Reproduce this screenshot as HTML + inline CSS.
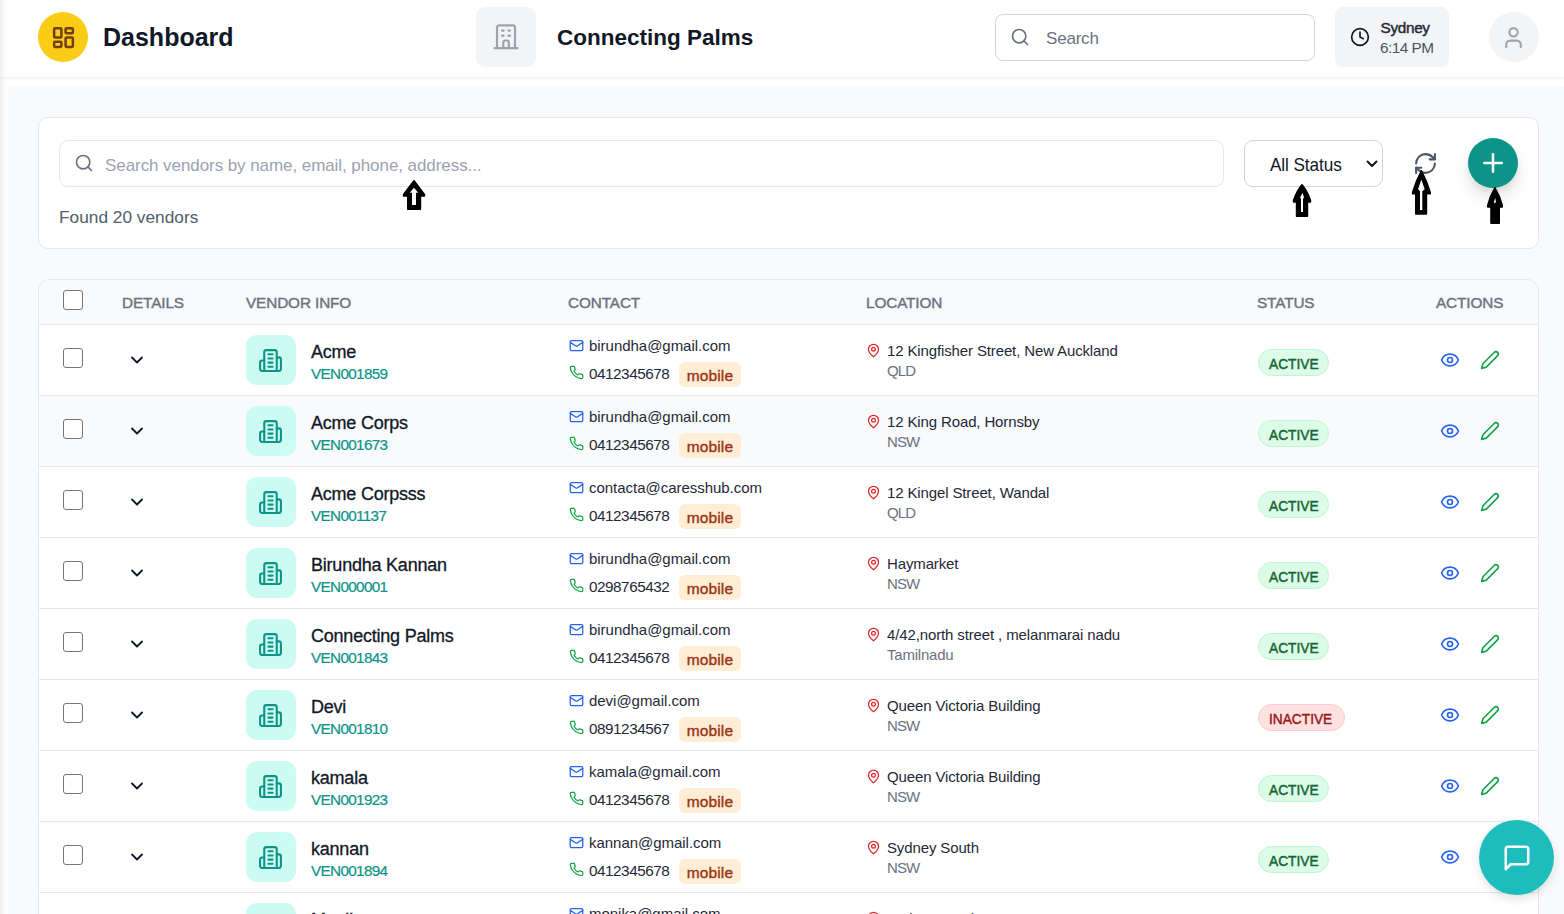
<!DOCTYPE html>
<html lang="en">
<head>
<meta charset="utf-8">
<title>Vendors</title>
<style>
*{box-sizing:border-box;margin:0;padding:0}
html,body{width:1564px;height:914px;overflow:hidden;background:#fff;font-family:"Liberation Sans","DejaVu Sans",sans-serif;color:#111827}
body{position:relative}
.abs{position:absolute}
svg{display:block}
/* header */
#hdr{position:absolute;left:0;top:0;width:1564px;height:77px;background:linear-gradient(90deg,#efeff0 0,#f8f8f8 3px,#fdfdfd 6px,#fff 8px);box-shadow:0 1px 3px rgba(0,0,0,.08)}
#leftshade{position:absolute;left:0;top:0;width:8px;height:914px;background:linear-gradient(90deg,#efeff0 0,#f8f8f8 3px,#fdfdfd 6px,#fff 8px)}
#logo{position:absolute;left:38px;top:12px;width:50px;height:50px;border-radius:50%;background:#facc15}
#dash{position:absolute;left:103px;top:22px;font-size:25px;font-weight:700;line-height:30px;color:#111827;white-space:nowrap}
#bld{position:absolute;left:476px;top:7px;width:60px;height:60px;border-radius:9px;background:#f3f4f6}
#org{position:absolute;left:557px;top:23px;font-size:22.5px;font-weight:700;line-height:30px;color:#111827;white-space:nowrap}
#srch{position:absolute;left:995px;top:14px;width:320px;height:47px;border:1px solid #d1d5db;border-radius:8px;background:#fff}
#srch span{position:absolute;left:50px;top:13px;font-size:17px;line-height:22px;color:#6b7280;letter-spacing:-.2px}
#clk{position:absolute;left:1335px;top:7px;width:114px;height:60px;border-radius:8px;background:#f3f4f6}
#clk .c1{position:absolute;left:45.5px;top:11px;font-size:15.3px;font-weight:400;-webkit-text-stroke:.42px #1f2937;line-height:20px;color:#1f2937;letter-spacing:-.3px}
#clk .c2{position:absolute;left:45px;top:31px;font-size:15.3px;line-height:20px;color:#4b5563;letter-spacing:-.5px}
#ava{position:absolute;left:1489px;top:12px;width:50px;height:50px;border-radius:50%;background:#f3f4f6}
/* content */
#content{position:absolute;left:8px;top:87px;width:1556px;height:827px;background:#f9fafb}
#fcard{position:absolute;left:38px;top:117px;width:1501px;height:132px;background:#fff;border:1px solid #e5e7eb;border-radius:10px}
#vsearch{position:absolute;left:59px;top:140px;width:1165px;height:47px;border:1px solid #e5e7eb;border-radius:9px;background:#fff}
#vsearch span{position:absolute;left:45px;top:14px;font-size:17px;line-height:22px;color:#9ca3af;letter-spacing:-.07px;white-space:nowrap}
#found{position:absolute;left:59px;top:206px;font-size:17.3px;line-height:22px;color:#535c6b;white-space:nowrap}
#sel{position:absolute;left:1244px;top:140px;width:139px;height:47px;border:1px solid #d1d5db;border-radius:9px;background:#fff}
#sel span{position:absolute;left:25px;top:12px;font-size:18.2px;line-height:24px;color:#111827;letter-spacing:-.1px;white-space:nowrap;transform:scaleX(.945);transform-origin:0 50%}
#plus{position:absolute;left:1468px;top:138px;width:50px;height:50px;border-radius:50%;background:#0d9488;box-shadow:0 10px 15px rgba(0,0,0,.10),0 4px 6px rgba(0,0,0,.06)}
/* table */
#tbl{position:absolute;left:38px;top:279px;width:1501px;height:700px;background:#fff;border:1px solid #e5e7eb;border-radius:12px;overflow:hidden}
#th{position:absolute;left:0;top:0;width:1499px;height:45px;background:#f9fafb;border-bottom:1px solid #e5e7eb}
#th span{position:absolute;top:14px;font-size:15.3px;line-height:18px;font-weight:400;-webkit-text-stroke:.42px #6b7280;letter-spacing:-.1px;color:#6b7280;white-space:nowrap}
.cb{position:absolute;width:20px;height:20px;border:1.5px solid #767676;border-radius:3px;background:#fff}
.row{position:absolute;left:0;width:1499px;height:71px;border-bottom:1px solid #e5e7eb;background:#fff}
.row.alt{background:#f9fafb}
.row .cb{left:24px;top:23px}
.chev{position:absolute;left:88px;top:25px}
.vic{position:absolute;left:207px;top:10px;width:50px;height:50px;border-radius:11px;background:#ccfbf1}
.vic svg{position:absolute;left:11.7px;top:12.5px}
.nm{position:absolute;left:272px;top:15px;font-size:18px;line-height:24px;color:#111827;white-space:nowrap;letter-spacing:-.22px;-webkit-text-stroke:.3px #111827}
.vid{position:absolute;left:272px;top:39px;font-size:15.3px;line-height:20px;color:#0d9488;white-space:nowrap;letter-spacing:-.68px;-webkit-text-stroke:.22px #0d9488}
.em{position:absolute;left:550px;top:11px;font-size:15px;line-height:20px;color:#1f2937;white-space:nowrap;letter-spacing:-.03px}
.ph{position:absolute;left:550px;top:39px;font-size:15.3px;line-height:20px;color:#1f2937;white-space:nowrap;letter-spacing:-.48px}
.mail{position:absolute;left:530px;top:13px}
.tel{position:absolute;left:530px;top:40px}
.mob{position:absolute;left:640px;top:37px;width:62px;height:25px;border-radius:6px;background:#ffedd5;color:#9a3412;font-size:15.5px;font-weight:400;-webkit-text-stroke:.38px #9a3412;line-height:27px;text-align:center;letter-spacing:.1px}
.pin{position:absolute;left:827px;top:18px}
.ad{position:absolute;left:848px;top:16px;font-size:15px;line-height:20px;color:#1f2937;white-space:nowrap;letter-spacing:-.13px}
.st{position:absolute;left:848px;top:36px;font-size:15px;line-height:20px;color:#6b7280;white-space:nowrap;letter-spacing:-.22px}
.st.u{letter-spacing:-.9px}
.bdg{position:absolute;left:1219px;top:24px;height:27px;border-radius:14px;font-size:15.5px;font-weight:400;-webkit-text-stroke:.5px;line-height:26px;white-space:nowrap}
.bdg span{position:absolute;left:10px;top:1px;display:block;transform:scaleX(.885);transform-origin:0 50%}
.bdg.a{width:71px;background:#dcfce7;border:1px solid #bbf7d0;color:#166534}
.bdg.i{width:87px;background:#fee2e2;border:1px solid #fecaca;color:#991b1b}
.eye{position:absolute;left:1401px;top:25px}
.pen{position:absolute;left:1441px;top:25px}
#chat{position:absolute;left:1479px;top:820px;width:75px;height:75px;border-radius:50%;background:#1ebdbd;box-shadow:0 4px 10px rgba(0,0,0,.12)}
</style>
</head>
<body>
<div id="content"></div>
<div id="leftshade"></div>
<div id="hdr">
  <div id="logo"><svg style="position:absolute;left:12.5px;top:12.5px" width="25" height="25" viewBox="0 0 24 24" fill="none" stroke="#713f12" stroke-width="2.4" stroke-linecap="round" stroke-linejoin="round"><rect x="3" y="3" width="7" height="9" rx="1"/><rect x="14" y="3" width="7" height="5" rx="1"/><rect x="14" y="12" width="7" height="9" rx="1"/><rect x="3" y="16" width="7" height="5" rx="1"/></svg></div>
  <div id="dash">Dashboard</div>
  <div id="bld"><svg style="position:absolute;left:0;top:0" width="60" height="60" viewBox="0 0 60 60" fill="none" stroke="#9ca3af" stroke-width="2.2" stroke-linecap="round" stroke-linejoin="round"><path d="M18.6 41.2H41.4"/><path d="M21 41.2V20.6a2.2 2.2 0 0 1 2.2-2.2h13.6a2.2 2.2 0 0 1 2.2 2.2V41.2"/><path d="M26 23.6h1.6M32.4 23.6H34M26 28.7h1.6M32.4 28.7H34"/><path d="M27.3 41.2V35.4a1.9 1.9 0 0 1 1.9-1.9h1.7a1.9 1.9 0 0 1 1.9 1.9V41.2"/></svg></div>
  <div id="org">Connecting Palms</div>
  <div id="srch"><svg style="position:absolute;left:14px;top:12px" width="20" height="20" viewBox="0 0 24 24" fill="none" stroke="#6b7280" stroke-width="2" stroke-linecap="round" stroke-linejoin="round"><circle cx="11" cy="11" r="8"/><path d="m21 21-4.3-4.3"/></svg><span>Search</span></div>
  <div id="clk"><svg style="position:absolute;left:15px;top:20px" width="20" height="20" viewBox="0 0 24 24" fill="none" stroke="#111827" stroke-width="2" stroke-linecap="round" stroke-linejoin="round"><circle cx="12" cy="12" r="10"/><path d="M12 6v6l4 2"/></svg><div class="c1">Sydney</div><div class="c2">6:14 PM</div></div>
  <div id="ava"><svg style="position:absolute;left:11.6px;top:12.5px" width="25" height="25" viewBox="0 0 24 24" fill="none" stroke="#9ca3af" stroke-width="2" stroke-linecap="round" stroke-linejoin="round"><path d="M19 21v-2a4 4 0 0 0-4-4H9a4 4 0 0 0-4 4v2"/><circle cx="12" cy="7" r="4"/></svg></div>
</div>
<div id="fcard"></div>
<div id="vsearch"><svg style="position:absolute;left:14px;top:12px" width="20" height="20" viewBox="0 0 24 24" fill="none" stroke="#6b7280" stroke-width="2" stroke-linecap="round" stroke-linejoin="round"><circle cx="11" cy="11" r="8"/><path d="m21 21-4.3-4.3"/></svg><span>Search vendors by name, email, phone, address...</span></div>
<div id="found">Found 20 vendors</div>
<div id="sel"><span>All Status</span><svg style="position:absolute;left:121px;top:18px" width="12" height="10" viewBox="0 0 12 10" fill="none" stroke="#111827" stroke-width="2" stroke-linecap="round" stroke-linejoin="round"><path d="M1.5 2.5 6 7l4.5-4.5"/></svg></div>
<svg id="refresh" style="position:absolute;left:1412.5px;top:150.5px" width="25" height="25" viewBox="0 0 24 24" fill="none" stroke="#4b5563" stroke-width="2" stroke-linecap="round" stroke-linejoin="round"><path d="M3 12a9 9 0 0 1 9-9 9.75 9.75 0 0 1 6.74 2.74L21 8"/><path d="M21 3v5h-5"/><path d="M21 12a9 9 0 0 1-9 9 9.75 9.75 0 0 1-6.74-2.74L3 16"/><path d="M8 16H3v5"/></svg>
<div id="plus"><svg style="position:absolute;left:10px;top:10px" width="30" height="30" viewBox="0 0 24 24" fill="none" stroke="#fff" stroke-width="2" stroke-linecap="round" stroke-linejoin="round"><path d="M5 12h14"/><path d="M12 5v14"/></svg></div>
<div id="tbl">
  <div id="th">
    <div class="cb" style="left:24px;top:10px"></div>
    <span style="left:83px">DETAILS</span>
    <span style="left:207px">VENDOR INFO</span>
    <span style="left:529px">CONTACT</span>
    <span style="left:827px">LOCATION</span>
    <span style="left:1218px">STATUS</span>
    <span style="left:1397px">ACTIONS</span>
  </div>
    <div class="row" style="top:45px">
    <div class="cb"></div><svg class="chev" width="20" height="20" viewBox="0 0 24 24" fill="none" stroke="#111827" stroke-width="2.2" stroke-linecap="round" stroke-linejoin="round"><path d="M6 9l6 6 6-6"/></svg><div class="vic"><svg width="25" height="25" viewBox="0 0 24 24" fill="none" stroke="#0d9488" stroke-width="2" stroke-linecap="round" stroke-linejoin="round"><path d="M6 22V4a2 2 0 0 1 2-2h8a2 2 0 0 1 2 2v18Z"/><path d="M6 12H4a2 2 0 0 0-2 2v6a2 2 0 0 0 2 2h2"/><path d="M18 9h2a2 2 0 0 1 2 2v9a2 2 0 0 1-2 2h-2"/><path d="M10 6h4"/><path d="M10 10h4"/><path d="M10 14h4"/><path d="M10 18h4"/></svg></div>
    <div class="nm">Acme</div><div class="vid">VEN001859</div>
    <svg class="mail" width="15" height="15" viewBox="0 0 24 24" fill="none" stroke="#2563eb" stroke-width="2" stroke-linecap="round" stroke-linejoin="round"><rect x="2" y="4" width="20" height="16" rx="2"/><path d="m22 7-8.97 5.7a1.94 1.94 0 0 1-2.06 0L2 7"/></svg><div class="em">birundha@gmail.com</div>
    <svg class="tel" width="15" height="15" viewBox="0 0 24 24" fill="none" stroke="#16a34a" stroke-width="2" stroke-linecap="round" stroke-linejoin="round"><path d="M22 16.92v3a2 2 0 0 1-2.18 2 19.79 19.79 0 0 1-8.63-3.07 19.5 19.5 0 0 1-6-6 19.79 19.79 0 0 1-3.07-8.67A2 2 0 0 1 4.11 2h3a2 2 0 0 1 2 1.72 12.84 12.84 0 0 0 .7 2.81 2 2 0 0 1-.45 2.11L8.09 9.91a16 16 0 0 0 6 6l1.27-1.27a2 2 0 0 1 2.11-.45 12.84 12.84 0 0 0 2.81.7A2 2 0 0 1 22 16.92z"/></svg><div class="ph">0412345678</div><div class="mob">mobile</div>
    <svg class="pin" width="15" height="15" viewBox="0 0 24 24" fill="none" stroke="#dc2626" stroke-width="2" stroke-linecap="round" stroke-linejoin="round"><path d="M20 10c0 6-8 12-8 12s-8-6-8-12a8 8 0 0 1 16 0Z"/><circle cx="12" cy="10" r="3"/></svg><div class="ad">12 Kingfisher Street, New Auckland</div><div class="st u">QLD</div>
    <div class="bdg a"><span>ACTIVE</span></div>
    <svg class="eye" width="20" height="20" viewBox="0 0 24 24" fill="none" stroke="#2563eb" stroke-width="2" stroke-linecap="round" stroke-linejoin="round"><path d="M2.062 12.348a1 1 0 0 1 0-.696 10.75 10.75 0 0 1 19.876 0 1 1 0 0 1 0 .696 10.75 10.75 0 0 1-19.876 0"/><circle cx="12" cy="12" r="3"/></svg><svg class="pen" width="20" height="20" viewBox="0 0 24 24" fill="none" stroke="#16a34a" stroke-width="2" stroke-linecap="round" stroke-linejoin="round"><path d="M17 3a2.85 2.83 0 1 1 4 4L7.5 20.5 2 22l1.5-5.5Z"/></svg>
  </div>
  <div class="row alt" style="top:116px">
    <div class="cb"></div><svg class="chev" width="20" height="20" viewBox="0 0 24 24" fill="none" stroke="#111827" stroke-width="2.2" stroke-linecap="round" stroke-linejoin="round"><path d="M6 9l6 6 6-6"/></svg><div class="vic"><svg width="25" height="25" viewBox="0 0 24 24" fill="none" stroke="#0d9488" stroke-width="2" stroke-linecap="round" stroke-linejoin="round"><path d="M6 22V4a2 2 0 0 1 2-2h8a2 2 0 0 1 2 2v18Z"/><path d="M6 12H4a2 2 0 0 0-2 2v6a2 2 0 0 0 2 2h2"/><path d="M18 9h2a2 2 0 0 1 2 2v9a2 2 0 0 1-2 2h-2"/><path d="M10 6h4"/><path d="M10 10h4"/><path d="M10 14h4"/><path d="M10 18h4"/></svg></div>
    <div class="nm">Acme Corps</div><div class="vid">VEN001673</div>
    <svg class="mail" width="15" height="15" viewBox="0 0 24 24" fill="none" stroke="#2563eb" stroke-width="2" stroke-linecap="round" stroke-linejoin="round"><rect x="2" y="4" width="20" height="16" rx="2"/><path d="m22 7-8.97 5.7a1.94 1.94 0 0 1-2.06 0L2 7"/></svg><div class="em">birundha@gmail.com</div>
    <svg class="tel" width="15" height="15" viewBox="0 0 24 24" fill="none" stroke="#16a34a" stroke-width="2" stroke-linecap="round" stroke-linejoin="round"><path d="M22 16.92v3a2 2 0 0 1-2.18 2 19.79 19.79 0 0 1-8.63-3.07 19.5 19.5 0 0 1-6-6 19.79 19.79 0 0 1-3.07-8.67A2 2 0 0 1 4.11 2h3a2 2 0 0 1 2 1.72 12.84 12.84 0 0 0 .7 2.81 2 2 0 0 1-.45 2.11L8.09 9.91a16 16 0 0 0 6 6l1.27-1.27a2 2 0 0 1 2.11-.45 12.84 12.84 0 0 0 2.81.7A2 2 0 0 1 22 16.92z"/></svg><div class="ph">0412345678</div><div class="mob">mobile</div>
    <svg class="pin" width="15" height="15" viewBox="0 0 24 24" fill="none" stroke="#dc2626" stroke-width="2" stroke-linecap="round" stroke-linejoin="round"><path d="M20 10c0 6-8 12-8 12s-8-6-8-12a8 8 0 0 1 16 0Z"/><circle cx="12" cy="10" r="3"/></svg><div class="ad">12 King Road, Hornsby</div><div class="st u">NSW</div>
    <div class="bdg a"><span>ACTIVE</span></div>
    <svg class="eye" width="20" height="20" viewBox="0 0 24 24" fill="none" stroke="#2563eb" stroke-width="2" stroke-linecap="round" stroke-linejoin="round"><path d="M2.062 12.348a1 1 0 0 1 0-.696 10.75 10.75 0 0 1 19.876 0 1 1 0 0 1 0 .696 10.75 10.75 0 0 1-19.876 0"/><circle cx="12" cy="12" r="3"/></svg><svg class="pen" width="20" height="20" viewBox="0 0 24 24" fill="none" stroke="#16a34a" stroke-width="2" stroke-linecap="round" stroke-linejoin="round"><path d="M17 3a2.85 2.83 0 1 1 4 4L7.5 20.5 2 22l1.5-5.5Z"/></svg>
  </div>
  <div class="row" style="top:187px">
    <div class="cb"></div><svg class="chev" width="20" height="20" viewBox="0 0 24 24" fill="none" stroke="#111827" stroke-width="2.2" stroke-linecap="round" stroke-linejoin="round"><path d="M6 9l6 6 6-6"/></svg><div class="vic"><svg width="25" height="25" viewBox="0 0 24 24" fill="none" stroke="#0d9488" stroke-width="2" stroke-linecap="round" stroke-linejoin="round"><path d="M6 22V4a2 2 0 0 1 2-2h8a2 2 0 0 1 2 2v18Z"/><path d="M6 12H4a2 2 0 0 0-2 2v6a2 2 0 0 0 2 2h2"/><path d="M18 9h2a2 2 0 0 1 2 2v9a2 2 0 0 1-2 2h-2"/><path d="M10 6h4"/><path d="M10 10h4"/><path d="M10 14h4"/><path d="M10 18h4"/></svg></div>
    <div class="nm">Acme Corpsss</div><div class="vid">VEN001137</div>
    <svg class="mail" width="15" height="15" viewBox="0 0 24 24" fill="none" stroke="#2563eb" stroke-width="2" stroke-linecap="round" stroke-linejoin="round"><rect x="2" y="4" width="20" height="16" rx="2"/><path d="m22 7-8.97 5.7a1.94 1.94 0 0 1-2.06 0L2 7"/></svg><div class="em">contacta@caresshub.com</div>
    <svg class="tel" width="15" height="15" viewBox="0 0 24 24" fill="none" stroke="#16a34a" stroke-width="2" stroke-linecap="round" stroke-linejoin="round"><path d="M22 16.92v3a2 2 0 0 1-2.18 2 19.79 19.79 0 0 1-8.63-3.07 19.5 19.5 0 0 1-6-6 19.79 19.79 0 0 1-3.07-8.67A2 2 0 0 1 4.11 2h3a2 2 0 0 1 2 1.72 12.84 12.84 0 0 0 .7 2.81 2 2 0 0 1-.45 2.11L8.09 9.91a16 16 0 0 0 6 6l1.27-1.27a2 2 0 0 1 2.11-.45 12.84 12.84 0 0 0 2.81.7A2 2 0 0 1 22 16.92z"/></svg><div class="ph">0412345678</div><div class="mob">mobile</div>
    <svg class="pin" width="15" height="15" viewBox="0 0 24 24" fill="none" stroke="#dc2626" stroke-width="2" stroke-linecap="round" stroke-linejoin="round"><path d="M20 10c0 6-8 12-8 12s-8-6-8-12a8 8 0 0 1 16 0Z"/><circle cx="12" cy="10" r="3"/></svg><div class="ad">12 Kingel Street, Wandal</div><div class="st u">QLD</div>
    <div class="bdg a"><span>ACTIVE</span></div>
    <svg class="eye" width="20" height="20" viewBox="0 0 24 24" fill="none" stroke="#2563eb" stroke-width="2" stroke-linecap="round" stroke-linejoin="round"><path d="M2.062 12.348a1 1 0 0 1 0-.696 10.75 10.75 0 0 1 19.876 0 1 1 0 0 1 0 .696 10.75 10.75 0 0 1-19.876 0"/><circle cx="12" cy="12" r="3"/></svg><svg class="pen" width="20" height="20" viewBox="0 0 24 24" fill="none" stroke="#16a34a" stroke-width="2" stroke-linecap="round" stroke-linejoin="round"><path d="M17 3a2.85 2.83 0 1 1 4 4L7.5 20.5 2 22l1.5-5.5Z"/></svg>
  </div>
  <div class="row" style="top:258px">
    <div class="cb"></div><svg class="chev" width="20" height="20" viewBox="0 0 24 24" fill="none" stroke="#111827" stroke-width="2.2" stroke-linecap="round" stroke-linejoin="round"><path d="M6 9l6 6 6-6"/></svg><div class="vic"><svg width="25" height="25" viewBox="0 0 24 24" fill="none" stroke="#0d9488" stroke-width="2" stroke-linecap="round" stroke-linejoin="round"><path d="M6 22V4a2 2 0 0 1 2-2h8a2 2 0 0 1 2 2v18Z"/><path d="M6 12H4a2 2 0 0 0-2 2v6a2 2 0 0 0 2 2h2"/><path d="M18 9h2a2 2 0 0 1 2 2v9a2 2 0 0 1-2 2h-2"/><path d="M10 6h4"/><path d="M10 10h4"/><path d="M10 14h4"/><path d="M10 18h4"/></svg></div>
    <div class="nm">Birundha Kannan</div><div class="vid">VEN000001</div>
    <svg class="mail" width="15" height="15" viewBox="0 0 24 24" fill="none" stroke="#2563eb" stroke-width="2" stroke-linecap="round" stroke-linejoin="round"><rect x="2" y="4" width="20" height="16" rx="2"/><path d="m22 7-8.97 5.7a1.94 1.94 0 0 1-2.06 0L2 7"/></svg><div class="em">birundha@gmail.com</div>
    <svg class="tel" width="15" height="15" viewBox="0 0 24 24" fill="none" stroke="#16a34a" stroke-width="2" stroke-linecap="round" stroke-linejoin="round"><path d="M22 16.92v3a2 2 0 0 1-2.18 2 19.79 19.79 0 0 1-8.63-3.07 19.5 19.5 0 0 1-6-6 19.79 19.79 0 0 1-3.07-8.67A2 2 0 0 1 4.11 2h3a2 2 0 0 1 2 1.72 12.84 12.84 0 0 0 .7 2.81 2 2 0 0 1-.45 2.11L8.09 9.91a16 16 0 0 0 6 6l1.27-1.27a2 2 0 0 1 2.11-.45 12.84 12.84 0 0 0 2.81.7A2 2 0 0 1 22 16.92z"/></svg><div class="ph">0298765432</div><div class="mob">mobile</div>
    <svg class="pin" width="15" height="15" viewBox="0 0 24 24" fill="none" stroke="#dc2626" stroke-width="2" stroke-linecap="round" stroke-linejoin="round"><path d="M20 10c0 6-8 12-8 12s-8-6-8-12a8 8 0 0 1 16 0Z"/><circle cx="12" cy="10" r="3"/></svg><div class="ad">Haymarket</div><div class="st u">NSW</div>
    <div class="bdg a"><span>ACTIVE</span></div>
    <svg class="eye" width="20" height="20" viewBox="0 0 24 24" fill="none" stroke="#2563eb" stroke-width="2" stroke-linecap="round" stroke-linejoin="round"><path d="M2.062 12.348a1 1 0 0 1 0-.696 10.75 10.75 0 0 1 19.876 0 1 1 0 0 1 0 .696 10.75 10.75 0 0 1-19.876 0"/><circle cx="12" cy="12" r="3"/></svg><svg class="pen" width="20" height="20" viewBox="0 0 24 24" fill="none" stroke="#16a34a" stroke-width="2" stroke-linecap="round" stroke-linejoin="round"><path d="M17 3a2.85 2.83 0 1 1 4 4L7.5 20.5 2 22l1.5-5.5Z"/></svg>
  </div>
  <div class="row" style="top:329px">
    <div class="cb"></div><svg class="chev" width="20" height="20" viewBox="0 0 24 24" fill="none" stroke="#111827" stroke-width="2.2" stroke-linecap="round" stroke-linejoin="round"><path d="M6 9l6 6 6-6"/></svg><div class="vic"><svg width="25" height="25" viewBox="0 0 24 24" fill="none" stroke="#0d9488" stroke-width="2" stroke-linecap="round" stroke-linejoin="round"><path d="M6 22V4a2 2 0 0 1 2-2h8a2 2 0 0 1 2 2v18Z"/><path d="M6 12H4a2 2 0 0 0-2 2v6a2 2 0 0 0 2 2h2"/><path d="M18 9h2a2 2 0 0 1 2 2v9a2 2 0 0 1-2 2h-2"/><path d="M10 6h4"/><path d="M10 10h4"/><path d="M10 14h4"/><path d="M10 18h4"/></svg></div>
    <div class="nm">Connecting Palms</div><div class="vid">VEN001843</div>
    <svg class="mail" width="15" height="15" viewBox="0 0 24 24" fill="none" stroke="#2563eb" stroke-width="2" stroke-linecap="round" stroke-linejoin="round"><rect x="2" y="4" width="20" height="16" rx="2"/><path d="m22 7-8.97 5.7a1.94 1.94 0 0 1-2.06 0L2 7"/></svg><div class="em">birundha@gmail.com</div>
    <svg class="tel" width="15" height="15" viewBox="0 0 24 24" fill="none" stroke="#16a34a" stroke-width="2" stroke-linecap="round" stroke-linejoin="round"><path d="M22 16.92v3a2 2 0 0 1-2.18 2 19.79 19.79 0 0 1-8.63-3.07 19.5 19.5 0 0 1-6-6 19.79 19.79 0 0 1-3.07-8.67A2 2 0 0 1 4.11 2h3a2 2 0 0 1 2 1.72 12.84 12.84 0 0 0 .7 2.81 2 2 0 0 1-.45 2.11L8.09 9.91a16 16 0 0 0 6 6l1.27-1.27a2 2 0 0 1 2.11-.45 12.84 12.84 0 0 0 2.81.7A2 2 0 0 1 22 16.92z"/></svg><div class="ph">0412345678</div><div class="mob">mobile</div>
    <svg class="pin" width="15" height="15" viewBox="0 0 24 24" fill="none" stroke="#dc2626" stroke-width="2" stroke-linecap="round" stroke-linejoin="round"><path d="M20 10c0 6-8 12-8 12s-8-6-8-12a8 8 0 0 1 16 0Z"/><circle cx="12" cy="10" r="3"/></svg><div class="ad">4/42,north street , melanmarai nadu</div><div class="st">Tamilnadu</div>
    <div class="bdg a"><span>ACTIVE</span></div>
    <svg class="eye" width="20" height="20" viewBox="0 0 24 24" fill="none" stroke="#2563eb" stroke-width="2" stroke-linecap="round" stroke-linejoin="round"><path d="M2.062 12.348a1 1 0 0 1 0-.696 10.75 10.75 0 0 1 19.876 0 1 1 0 0 1 0 .696 10.75 10.75 0 0 1-19.876 0"/><circle cx="12" cy="12" r="3"/></svg><svg class="pen" width="20" height="20" viewBox="0 0 24 24" fill="none" stroke="#16a34a" stroke-width="2" stroke-linecap="round" stroke-linejoin="round"><path d="M17 3a2.85 2.83 0 1 1 4 4L7.5 20.5 2 22l1.5-5.5Z"/></svg>
  </div>
  <div class="row" style="top:400px">
    <div class="cb"></div><svg class="chev" width="20" height="20" viewBox="0 0 24 24" fill="none" stroke="#111827" stroke-width="2.2" stroke-linecap="round" stroke-linejoin="round"><path d="M6 9l6 6 6-6"/></svg><div class="vic"><svg width="25" height="25" viewBox="0 0 24 24" fill="none" stroke="#0d9488" stroke-width="2" stroke-linecap="round" stroke-linejoin="round"><path d="M6 22V4a2 2 0 0 1 2-2h8a2 2 0 0 1 2 2v18Z"/><path d="M6 12H4a2 2 0 0 0-2 2v6a2 2 0 0 0 2 2h2"/><path d="M18 9h2a2 2 0 0 1 2 2v9a2 2 0 0 1-2 2h-2"/><path d="M10 6h4"/><path d="M10 10h4"/><path d="M10 14h4"/><path d="M10 18h4"/></svg></div>
    <div class="nm">Devi</div><div class="vid">VEN001810</div>
    <svg class="mail" width="15" height="15" viewBox="0 0 24 24" fill="none" stroke="#2563eb" stroke-width="2" stroke-linecap="round" stroke-linejoin="round"><rect x="2" y="4" width="20" height="16" rx="2"/><path d="m22 7-8.97 5.7a1.94 1.94 0 0 1-2.06 0L2 7"/></svg><div class="em">devi@gmail.com</div>
    <svg class="tel" width="15" height="15" viewBox="0 0 24 24" fill="none" stroke="#16a34a" stroke-width="2" stroke-linecap="round" stroke-linejoin="round"><path d="M22 16.92v3a2 2 0 0 1-2.18 2 19.79 19.79 0 0 1-8.63-3.07 19.5 19.5 0 0 1-6-6 19.79 19.79 0 0 1-3.07-8.67A2 2 0 0 1 4.11 2h3a2 2 0 0 1 2 1.72 12.84 12.84 0 0 0 .7 2.81 2 2 0 0 1-.45 2.11L8.09 9.91a16 16 0 0 0 6 6l1.27-1.27a2 2 0 0 1 2.11-.45 12.84 12.84 0 0 0 2.81.7A2 2 0 0 1 22 16.92z"/></svg><div class="ph">0891234567</div><div class="mob">mobile</div>
    <svg class="pin" width="15" height="15" viewBox="0 0 24 24" fill="none" stroke="#dc2626" stroke-width="2" stroke-linecap="round" stroke-linejoin="round"><path d="M20 10c0 6-8 12-8 12s-8-6-8-12a8 8 0 0 1 16 0Z"/><circle cx="12" cy="10" r="3"/></svg><div class="ad">Queen Victoria Building</div><div class="st u">NSW</div>
    <div class="bdg i"><span>INACTIVE</span></div>
    <svg class="eye" width="20" height="20" viewBox="0 0 24 24" fill="none" stroke="#2563eb" stroke-width="2" stroke-linecap="round" stroke-linejoin="round"><path d="M2.062 12.348a1 1 0 0 1 0-.696 10.75 10.75 0 0 1 19.876 0 1 1 0 0 1 0 .696 10.75 10.75 0 0 1-19.876 0"/><circle cx="12" cy="12" r="3"/></svg><svg class="pen" width="20" height="20" viewBox="0 0 24 24" fill="none" stroke="#16a34a" stroke-width="2" stroke-linecap="round" stroke-linejoin="round"><path d="M17 3a2.85 2.83 0 1 1 4 4L7.5 20.5 2 22l1.5-5.5Z"/></svg>
  </div>
  <div class="row" style="top:471px">
    <div class="cb"></div><svg class="chev" width="20" height="20" viewBox="0 0 24 24" fill="none" stroke="#111827" stroke-width="2.2" stroke-linecap="round" stroke-linejoin="round"><path d="M6 9l6 6 6-6"/></svg><div class="vic"><svg width="25" height="25" viewBox="0 0 24 24" fill="none" stroke="#0d9488" stroke-width="2" stroke-linecap="round" stroke-linejoin="round"><path d="M6 22V4a2 2 0 0 1 2-2h8a2 2 0 0 1 2 2v18Z"/><path d="M6 12H4a2 2 0 0 0-2 2v6a2 2 0 0 0 2 2h2"/><path d="M18 9h2a2 2 0 0 1 2 2v9a2 2 0 0 1-2 2h-2"/><path d="M10 6h4"/><path d="M10 10h4"/><path d="M10 14h4"/><path d="M10 18h4"/></svg></div>
    <div class="nm">kamala</div><div class="vid">VEN001923</div>
    <svg class="mail" width="15" height="15" viewBox="0 0 24 24" fill="none" stroke="#2563eb" stroke-width="2" stroke-linecap="round" stroke-linejoin="round"><rect x="2" y="4" width="20" height="16" rx="2"/><path d="m22 7-8.97 5.7a1.94 1.94 0 0 1-2.06 0L2 7"/></svg><div class="em">kamala@gmail.com</div>
    <svg class="tel" width="15" height="15" viewBox="0 0 24 24" fill="none" stroke="#16a34a" stroke-width="2" stroke-linecap="round" stroke-linejoin="round"><path d="M22 16.92v3a2 2 0 0 1-2.18 2 19.79 19.79 0 0 1-8.63-3.07 19.5 19.5 0 0 1-6-6 19.79 19.79 0 0 1-3.07-8.67A2 2 0 0 1 4.11 2h3a2 2 0 0 1 2 1.72 12.84 12.84 0 0 0 .7 2.81 2 2 0 0 1-.45 2.11L8.09 9.91a16 16 0 0 0 6 6l1.27-1.27a2 2 0 0 1 2.11-.45 12.84 12.84 0 0 0 2.81.7A2 2 0 0 1 22 16.92z"/></svg><div class="ph">0412345678</div><div class="mob">mobile</div>
    <svg class="pin" width="15" height="15" viewBox="0 0 24 24" fill="none" stroke="#dc2626" stroke-width="2" stroke-linecap="round" stroke-linejoin="round"><path d="M20 10c0 6-8 12-8 12s-8-6-8-12a8 8 0 0 1 16 0Z"/><circle cx="12" cy="10" r="3"/></svg><div class="ad">Queen Victoria Building</div><div class="st u">NSW</div>
    <div class="bdg a"><span>ACTIVE</span></div>
    <svg class="eye" width="20" height="20" viewBox="0 0 24 24" fill="none" stroke="#2563eb" stroke-width="2" stroke-linecap="round" stroke-linejoin="round"><path d="M2.062 12.348a1 1 0 0 1 0-.696 10.75 10.75 0 0 1 19.876 0 1 1 0 0 1 0 .696 10.75 10.75 0 0 1-19.876 0"/><circle cx="12" cy="12" r="3"/></svg><svg class="pen" width="20" height="20" viewBox="0 0 24 24" fill="none" stroke="#16a34a" stroke-width="2" stroke-linecap="round" stroke-linejoin="round"><path d="M17 3a2.85 2.83 0 1 1 4 4L7.5 20.5 2 22l1.5-5.5Z"/></svg>
  </div>
  <div class="row" style="top:542px">
    <div class="cb"></div><svg class="chev" width="20" height="20" viewBox="0 0 24 24" fill="none" stroke="#111827" stroke-width="2.2" stroke-linecap="round" stroke-linejoin="round"><path d="M6 9l6 6 6-6"/></svg><div class="vic"><svg width="25" height="25" viewBox="0 0 24 24" fill="none" stroke="#0d9488" stroke-width="2" stroke-linecap="round" stroke-linejoin="round"><path d="M6 22V4a2 2 0 0 1 2-2h8a2 2 0 0 1 2 2v18Z"/><path d="M6 12H4a2 2 0 0 0-2 2v6a2 2 0 0 0 2 2h2"/><path d="M18 9h2a2 2 0 0 1 2 2v9a2 2 0 0 1-2 2h-2"/><path d="M10 6h4"/><path d="M10 10h4"/><path d="M10 14h4"/><path d="M10 18h4"/></svg></div>
    <div class="nm">kannan</div><div class="vid">VEN001894</div>
    <svg class="mail" width="15" height="15" viewBox="0 0 24 24" fill="none" stroke="#2563eb" stroke-width="2" stroke-linecap="round" stroke-linejoin="round"><rect x="2" y="4" width="20" height="16" rx="2"/><path d="m22 7-8.97 5.7a1.94 1.94 0 0 1-2.06 0L2 7"/></svg><div class="em">kannan@gmail.com</div>
    <svg class="tel" width="15" height="15" viewBox="0 0 24 24" fill="none" stroke="#16a34a" stroke-width="2" stroke-linecap="round" stroke-linejoin="round"><path d="M22 16.92v3a2 2 0 0 1-2.18 2 19.79 19.79 0 0 1-8.63-3.07 19.5 19.5 0 0 1-6-6 19.79 19.79 0 0 1-3.07-8.67A2 2 0 0 1 4.11 2h3a2 2 0 0 1 2 1.72 12.84 12.84 0 0 0 .7 2.81 2 2 0 0 1-.45 2.11L8.09 9.91a16 16 0 0 0 6 6l1.27-1.27a2 2 0 0 1 2.11-.45 12.84 12.84 0 0 0 2.81.7A2 2 0 0 1 22 16.92z"/></svg><div class="ph">0412345678</div><div class="mob">mobile</div>
    <svg class="pin" width="15" height="15" viewBox="0 0 24 24" fill="none" stroke="#dc2626" stroke-width="2" stroke-linecap="round" stroke-linejoin="round"><path d="M20 10c0 6-8 12-8 12s-8-6-8-12a8 8 0 0 1 16 0Z"/><circle cx="12" cy="10" r="3"/></svg><div class="ad">Sydney South</div><div class="st u">NSW</div>
    <div class="bdg a"><span>ACTIVE</span></div>
    <svg class="eye" width="20" height="20" viewBox="0 0 24 24" fill="none" stroke="#2563eb" stroke-width="2" stroke-linecap="round" stroke-linejoin="round"><path d="M2.062 12.348a1 1 0 0 1 0-.696 10.75 10.75 0 0 1 19.876 0 1 1 0 0 1 0 .696 10.75 10.75 0 0 1-19.876 0"/><circle cx="12" cy="12" r="3"/></svg><svg class="pen" width="20" height="20" viewBox="0 0 24 24" fill="none" stroke="#16a34a" stroke-width="2" stroke-linecap="round" stroke-linejoin="round"><path d="M17 3a2.85 2.83 0 1 1 4 4L7.5 20.5 2 22l1.5-5.5Z"/></svg>
  </div>
  <div class="row" style="top:613px">
    <div class="cb"></div><svg class="chev" width="20" height="20" viewBox="0 0 24 24" fill="none" stroke="#111827" stroke-width="2.2" stroke-linecap="round" stroke-linejoin="round"><path d="M6 9l6 6 6-6"/></svg><div class="vic"><svg width="25" height="25" viewBox="0 0 24 24" fill="none" stroke="#0d9488" stroke-width="2" stroke-linecap="round" stroke-linejoin="round"><path d="M6 22V4a2 2 0 0 1 2-2h8a2 2 0 0 1 2 2v18Z"/><path d="M6 12H4a2 2 0 0 0-2 2v6a2 2 0 0 0 2 2h2"/><path d="M18 9h2a2 2 0 0 1 2 2v9a2 2 0 0 1-2 2h-2"/><path d="M10 6h4"/><path d="M10 10h4"/><path d="M10 14h4"/><path d="M10 18h4"/></svg></div>
    <div class="nm">Monika</div><div class="vid">VEN001895</div>
    <svg class="mail" width="15" height="15" viewBox="0 0 24 24" fill="none" stroke="#2563eb" stroke-width="2" stroke-linecap="round" stroke-linejoin="round"><rect x="2" y="4" width="20" height="16" rx="2"/><path d="m22 7-8.97 5.7a1.94 1.94 0 0 1-2.06 0L2 7"/></svg><div class="em">monika@gmail.com</div>
    <svg class="tel" width="15" height="15" viewBox="0 0 24 24" fill="none" stroke="#16a34a" stroke-width="2" stroke-linecap="round" stroke-linejoin="round"><path d="M22 16.92v3a2 2 0 0 1-2.18 2 19.79 19.79 0 0 1-8.63-3.07 19.5 19.5 0 0 1-6-6 19.79 19.79 0 0 1-3.07-8.67A2 2 0 0 1 4.11 2h3a2 2 0 0 1 2 1.72 12.84 12.84 0 0 0 .7 2.81 2 2 0 0 1-.45 2.11L8.09 9.91a16 16 0 0 0 6 6l1.27-1.27a2 2 0 0 1 2.11-.45 12.84 12.84 0 0 0 2.81.7A2 2 0 0 1 22 16.92z"/></svg><div class="ph">0412345678</div><div class="mob">mobile</div>
    <svg class="pin" width="15" height="15" viewBox="0 0 24 24" fill="none" stroke="#dc2626" stroke-width="2" stroke-linecap="round" stroke-linejoin="round"><path d="M20 10c0 6-8 12-8 12s-8-6-8-12a8 8 0 0 1 16 0Z"/><circle cx="12" cy="10" r="3"/></svg><div class="ad">Sydney South</div><div class="st u">NSW</div>
    <div class="bdg a"><span>ACTIVE</span></div>
    <svg class="eye" width="20" height="20" viewBox="0 0 24 24" fill="none" stroke="#2563eb" stroke-width="2" stroke-linecap="round" stroke-linejoin="round"><path d="M2.062 12.348a1 1 0 0 1 0-.696 10.75 10.75 0 0 1 19.876 0 1 1 0 0 1 0 .696 10.75 10.75 0 0 1-19.876 0"/><circle cx="12" cy="12" r="3"/></svg><svg class="pen" width="20" height="20" viewBox="0 0 24 24" fill="none" stroke="#16a34a" stroke-width="2" stroke-linecap="round" stroke-linejoin="round"><path d="M17 3a2.85 2.83 0 1 1 4 4L7.5 20.5 2 22l1.5-5.5Z"/></svg>
  </div>
</div>
<div id="chat"><svg style="position:absolute;left:22.5px;top:22.5px" width="30" height="30" viewBox="0 0 24 24" fill="none" stroke="#fff" stroke-width="2" stroke-linecap="round" stroke-linejoin="round"><path d="M21 15a2 2 0 0 1-2 2H7l-4 4V5a2 2 0 0 1 2-2h14a2 2 0 0 1 2 2z"/></svg></div>
<svg id="arrows" style="position:absolute;left:0;top:0;pointer-events:none" width="1564" height="914" viewBox="0 0 1564 914">
  <g fill="#000" stroke="#000" stroke-width="1.6" stroke-linejoin="round">
    <path d="M414 180.8 424.4 194.6V196H420.4V209.2H407.8V196H403.6V194.6Z"/>
    <path d="M1302 184.8Q1307.2 191 1310.4 200.2V202H1307.4V216.2H1296.6V202H1293.6V200.2Q1296.8 191 1302 184.8Z"/>
    <path d="M1421.4 170.8Q1426.9 181.1 1430.2 192.4V193.8H1426.4V214H1415.8V193.8H1412.6V192.4Q1415.9 181.1 1421.4 170.8Z"/>
    <path d="M1494.9 187.8Q1499.9 195.9 1502.2 205.2V207H1499.2V223.2H1491V207H1487.8V205.2Q1490 195.9 1494.9 187.8Z"/>
  </g>
  <g fill="#fff">
    <path d="M414 187.8 418.2 192.7H416V205H412V192.7H409.7Z"/>
    <path d="M1302.5 193 1304 197.2 1303 198.9V211.9H1301V198.9L1300.1 197.2Z"/>
    <path d="M1421.3 179.4 1424.7 189.2 1422.3 191.2V209.9H1420V191.2L1418.1 189.2Z"/>
    <path d="M1495.4 197.9 1495.9 202 1494.8 203.5 1493.9 202Z"/>
  </g>
</svg>
</body>
</html>
